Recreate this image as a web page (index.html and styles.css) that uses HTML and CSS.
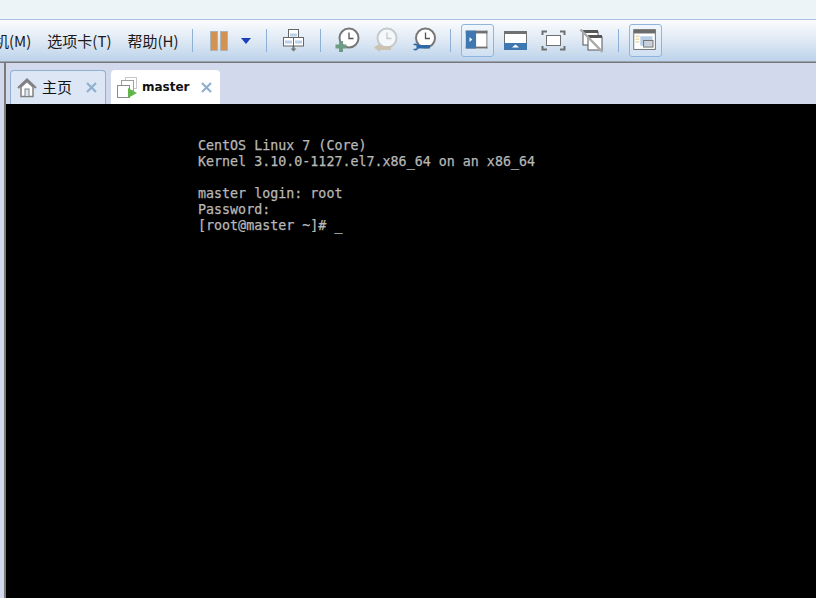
FILE: index.html
```html
<!DOCTYPE html>
<html lang="zh">
<head>
<meta charset="utf-8">
<title>master - VMware Workstation</title>
<link rel="stylesheet" href="styles.css">
</head>
<body>
<div class="titleband"></div>
<div class="toolbar">
  <span class="menu menu-clipped">机(M)</span>
  <span class="menu">选项卡(T)</span>
  <span class="menu">帮助(H)</span>
  <span class="sep sep-a"></span>
  <svg class="pause" width="18" height="20" viewBox="0 0 18 20"><rect x="0.5" y="0.5" width="7" height="19" fill="#d29350" stroke="#aeb4b8"/><rect x="10.5" y="0.5" width="7" height="19" fill="#d29350" stroke="#aeb4b8"/></svg>
  <svg class="caret" width="10" height="6" viewBox="0 0 10 6"><path d="M0 0H10L5 6Z" fill="#1f3fb8"/></svg>
  <span class="sep sep-b"></span>
  <span class="tool">
    <svg viewBox="0 0 33 33" width="33" height="33"><path d="M16.5 22V26" stroke="#777" stroke-width="2"/><path d="M13.5 24.500H19.500L16.500 27.500Z" fill="#777"/><rect x="11.500" y="5.500" width="10" height="9" fill="#fff" stroke="#666"/><rect x="13" y="9.500" width="7" height="3" fill="#b9d0ea"/><rect x="6.500" y="13.500" width="10" height="8.500" fill="#fff" stroke="#666"/><rect x="8" y="16.500" width="7" height="3" fill="#b9d0ea"/><rect x="16.500" y="13.500" width="10" height="8.500" fill="#fff" stroke="#666"/><rect x="18" y="16.500" width="7" height="3" fill="#b9d0ea"/></svg>
  </span>
  <span class="sep sep-c"></span>
  <span class="tool">
    <svg viewBox="0 0 33 33" width="33" height="33"><circle cx="18" cy="14" r="9.500" fill="#fff" stroke="#777" stroke-width="2"/><path d="M18 8.500V14.500H22.500" fill="none" stroke="#555" stroke-width="1.300"/><path d="M8 17H12V20.500H15.500V24.500H12V28H8V24.500H4.500V20.500H8Z" fill="#6f9c85"/></svg>
  </span>
  <span class="tool tool-clock">
    <svg viewBox="0 0 33 33" width="33" height="33"><circle cx="17" cy="14" r="9.500" fill="#f4f8fb" stroke="#c5c9cc" stroke-width="2"/><path d="M17 8.500V14.500H21.500" fill="none" stroke="#c4c8cb" stroke-width="1.300"/><path d="M4 23.500L10 19.500V22H21V26H10V28Z" fill="#cbc3b0"/></svg>
  </span>
  <span class="tool tool-clock">
    <svg viewBox="0 0 33 33" width="33" height="33"><circle cx="16.500" cy="14" r="9.500" fill="#fff" stroke="#777" stroke-width="2"/><path d="M16.500 8.500V14.500H21" fill="none" stroke="#555" stroke-width="1.300"/><path d="M4 21C5 19 8 19 9.500 21H21V24.500H9.500C8 27 5 27 4 25L7.500 24.500V21.500Z" fill="#2e6aa8"/></svg>
  </span>
  <span class="sep sep-d"></span>
  <span class="tool tool-on">
    <svg viewBox="0 0 33 33" width="31" height="31"><rect x="4" y="6" width="23" height="19" fill="#fff"/><rect x="4" y="6" width="23" height="3" fill="#707070"/><rect x="4" y="23" width="23" height="2" fill="#707070"/><rect x="4" y="6" width="11" height="19" fill="#3f78b0"/><rect x="26" y="6" width="1" height="19" fill="#707070"/><path d="M8 13L11 15.500L8 18Z" fill="#fff"/></svg>
  </span>
  <span class="tool tool-view">
    <svg viewBox="0 0 33 33" width="33" height="33"><rect x="5" y="7" width="23" height="19" fill="#fff"/><rect x="5" y="7" width="23" height="3" fill="#707070"/><rect x="5" y="19" width="23" height="7" fill="#3f78b0"/><rect x="5" y="7" width="1" height="12" fill="#707070"/><rect x="27" y="7" width="1" height="12" fill="#707070"/><path d="M13 23.500L16.500 20.500L20 23.500Z" fill="#fff"/></svg>
  </span>
  <span class="tool tool-view">
    <svg viewBox="0 0 33 33" width="33" height="33"><rect x="9.500" y="11.500" width="14" height="10" fill="#fff" stroke="#707070"/><path d="M5.500 11V7.500H10M23 7.500H27.500V11M27.500 22V25.500H23M10 25.500H5.500V22" fill="none" stroke="#707070" stroke-width="2"/></svg>
  </span>
  <span class="tool tool-view">
    <svg viewBox="0 0 33 33" width="33" height="33"><rect x="8" y="8" width="15" height="13" fill="#fff" stroke="#555" stroke-width="1"/><rect x="8" y="6" width="15" height="3" fill="#555"/><rect x="13" y="13" width="14" height="13" fill="#fff" stroke="#555"/><rect x="13" y="11" width="14" height="3" fill="#555"/><path d="M5.500 5.500L27.500 28" stroke="#a9a9a9" stroke-width="2.500"/></svg>
  </span>
  <span class="sep sep-e"></span>
  <span class="tool tool-on">
    <svg viewBox="0 0 33 33" width="31" height="31"><rect x="4" y="5" width="23" height="21" fill="#fff" stroke="#6c6c6c"/><rect x="4" y="5" width="23" height="4" fill="#6c6c6c"/><rect x="11" y="12" width="13" height="10" fill="#b6cde6"/><rect x="14.500" y="16.500" width="10" height="7" fill="#c9d2dc" stroke="#707070"/><path d="M6 12H10M6 15H10M6 18H10" stroke="#e4c66a"/></svg>
  </span>
</div>
<div class="main">
  <div class="console">
    <div class="tabs">
      <div class="tab tab-home">
        <svg width="20" height="20" viewBox="0 0 20 20"><path d="M1 10L10 1.500L19 10" fill="none" stroke="#808080" stroke-width="2"/><path d="M4 9V18.500H16V9L10 3.500Z" fill="#fff" stroke="#808080" stroke-width="1.500"/><rect x="8" y="11" width="4" height="7.500" fill="#dce6f4" stroke="#808080"/></svg>
        <span class="tab-label">主页</span>
        <svg class="tab-close" width="11" height="11" viewBox="0 0 11 11"><path d="M1 1L10 10M10 1L1 10" stroke="#8fb0d0" stroke-width="2.200"/></svg>
      </div>
      <div class="tab tab-active">
        <svg width="21" height="21" viewBox="0 0 21 21"><rect x="8.500" y="0.500" width="11" height="11" fill="#fff" stroke="#c8c8c8"/><rect x="4.500" y="3.500" width="12" height="10" fill="#fff" stroke="#a0a0a0"/><rect x="0.500" y="8.500" width="12" height="12" fill="#fff" stroke="#8c8c8c"/><path d="M11 11L20 16L11 21Z" fill="#62b54a"/></svg>
        <span class="tab-label tab-label-bold">master</span>
        <svg class="tab-close" width="11" height="11" viewBox="0 0 11 11"><path d="M1 1L10 10M10 1L1 10" stroke="#8fb0d0" stroke-width="2.200"/></svg>
      </div>
    </div>
    <pre class="screen">CentOS Linux 7 (Core)
Kernel 3.10.0-1127.el7.x86_64 on an x86_64

master login: root
Password:
[root@master ~]# _</pre>
  </div>
</div>
</body>
</html>
```
FILE: styles.css
```css
html, body {
  margin: 0;
  padding: 0;
  height: 100%;
  overflow: hidden;
}
body {
  display: flex;
  flex-direction: column;
  background: #d3d9ec;
  font-family: "Noto Sans CJK SC", "Noto Sans", sans-serif;
}
.titleband {
  flex: none;
  height: 19px;
  background: #ecf4f8;
  border-bottom: 1px solid #a9c0de;
}
.toolbar {
  flex: none;
  box-sizing: border-box;
  height: 42px;
  display: flex;
  align-items: center;
  overflow: hidden;
  background: linear-gradient(#fbfcfe, #dfe9f4 50%, #bcd3ea);
  border-bottom: 1px solid #9aa3ad;
}
.menu {
  font-size: 15px;
  line-height: 20px;
  color: #1a1a1a;
  margin-right: 16px;
  white-space: nowrap;
}
.menu-clipped { margin-left: -6px; }
.sep {
  flex: none;
  width: 1px;
  height: 23px;
  background: #8fb0d6;
  margin-left: 10px;
  margin-right: 10px;
}
.sep-a { margin-left: -3px; margin-right: 17px; }
.sep-b { margin-left: 15px; }
.sep-d { margin-left: 8px; }
.pause { flex: none; margin-right: 13px; }
.caret { flex: none; }
.tool {
  flex: none;
  box-sizing: border-box;
  width: 33px;
  height: 33px;
  display: flex;
  align-items: center;
  justify-content: center;
}
.tool-clock { margin-left: 6px; }
.tool-view { margin-left: 5px; }
.tool-on {
  border: 1px solid #8fb4e0;
  border-radius: 3px;
  background: linear-gradient(#f0f6fc, #cfe0f2);
}
.main {
  flex: 1;
  min-height: 0;
  display: flex;
  padding-left: 4px;
  border-top: 1px solid #777;
}
.console {
  flex: 1;
  min-width: 0;
  display: flex;
  flex-direction: column;
  border-left: 2px solid #7a7a7a;
}
.tabs {
  flex: none;
  box-sizing: border-box;
  height: 41px;
  display: flex;
  align-items: flex-end;
  gap: 5px;
  padding-left: 4px;
  background: #d3d9ec;
}
.tab {
  box-sizing: border-box;
  height: 34px;
  display: flex;
  align-items: center;
  border-radius: 4px 4px 0 0;
}
.tab-home {
  width: 96px;
  padding-left: 6px;
  background: #dce6f4;
  border: 1px solid #8fb0d0;
  border-bottom: 0;
}
.tab-active {
  width: 109px;
  padding-left: 6px;
  background: #fff;
}
.tab-label {
  flex: 1;
  margin-left: 5px;
  margin-bottom: 3px;
  font-size: 15px;
  color: #111;
}
.tab-label-bold {
  font-family: "DejaVu Sans", sans-serif;
  font-weight: 700;
  font-size: 12px;
  margin-left: 4px;
  margin-bottom: 0;
}
.tab-close {
  flex: none;
  margin-right: 8px;
}
.screen {
  flex: 1;
  margin: 0;
  box-sizing: border-box;
  padding: 34px 0 0 192px;
  background: #000;
  color: #b8b8b8;
  font-family: "DejaVu Sans Mono", monospace;
  font-size: 13.33px;
  line-height: 16px;
  -webkit-text-stroke: 0.25px #b8b8b8;
}
```
